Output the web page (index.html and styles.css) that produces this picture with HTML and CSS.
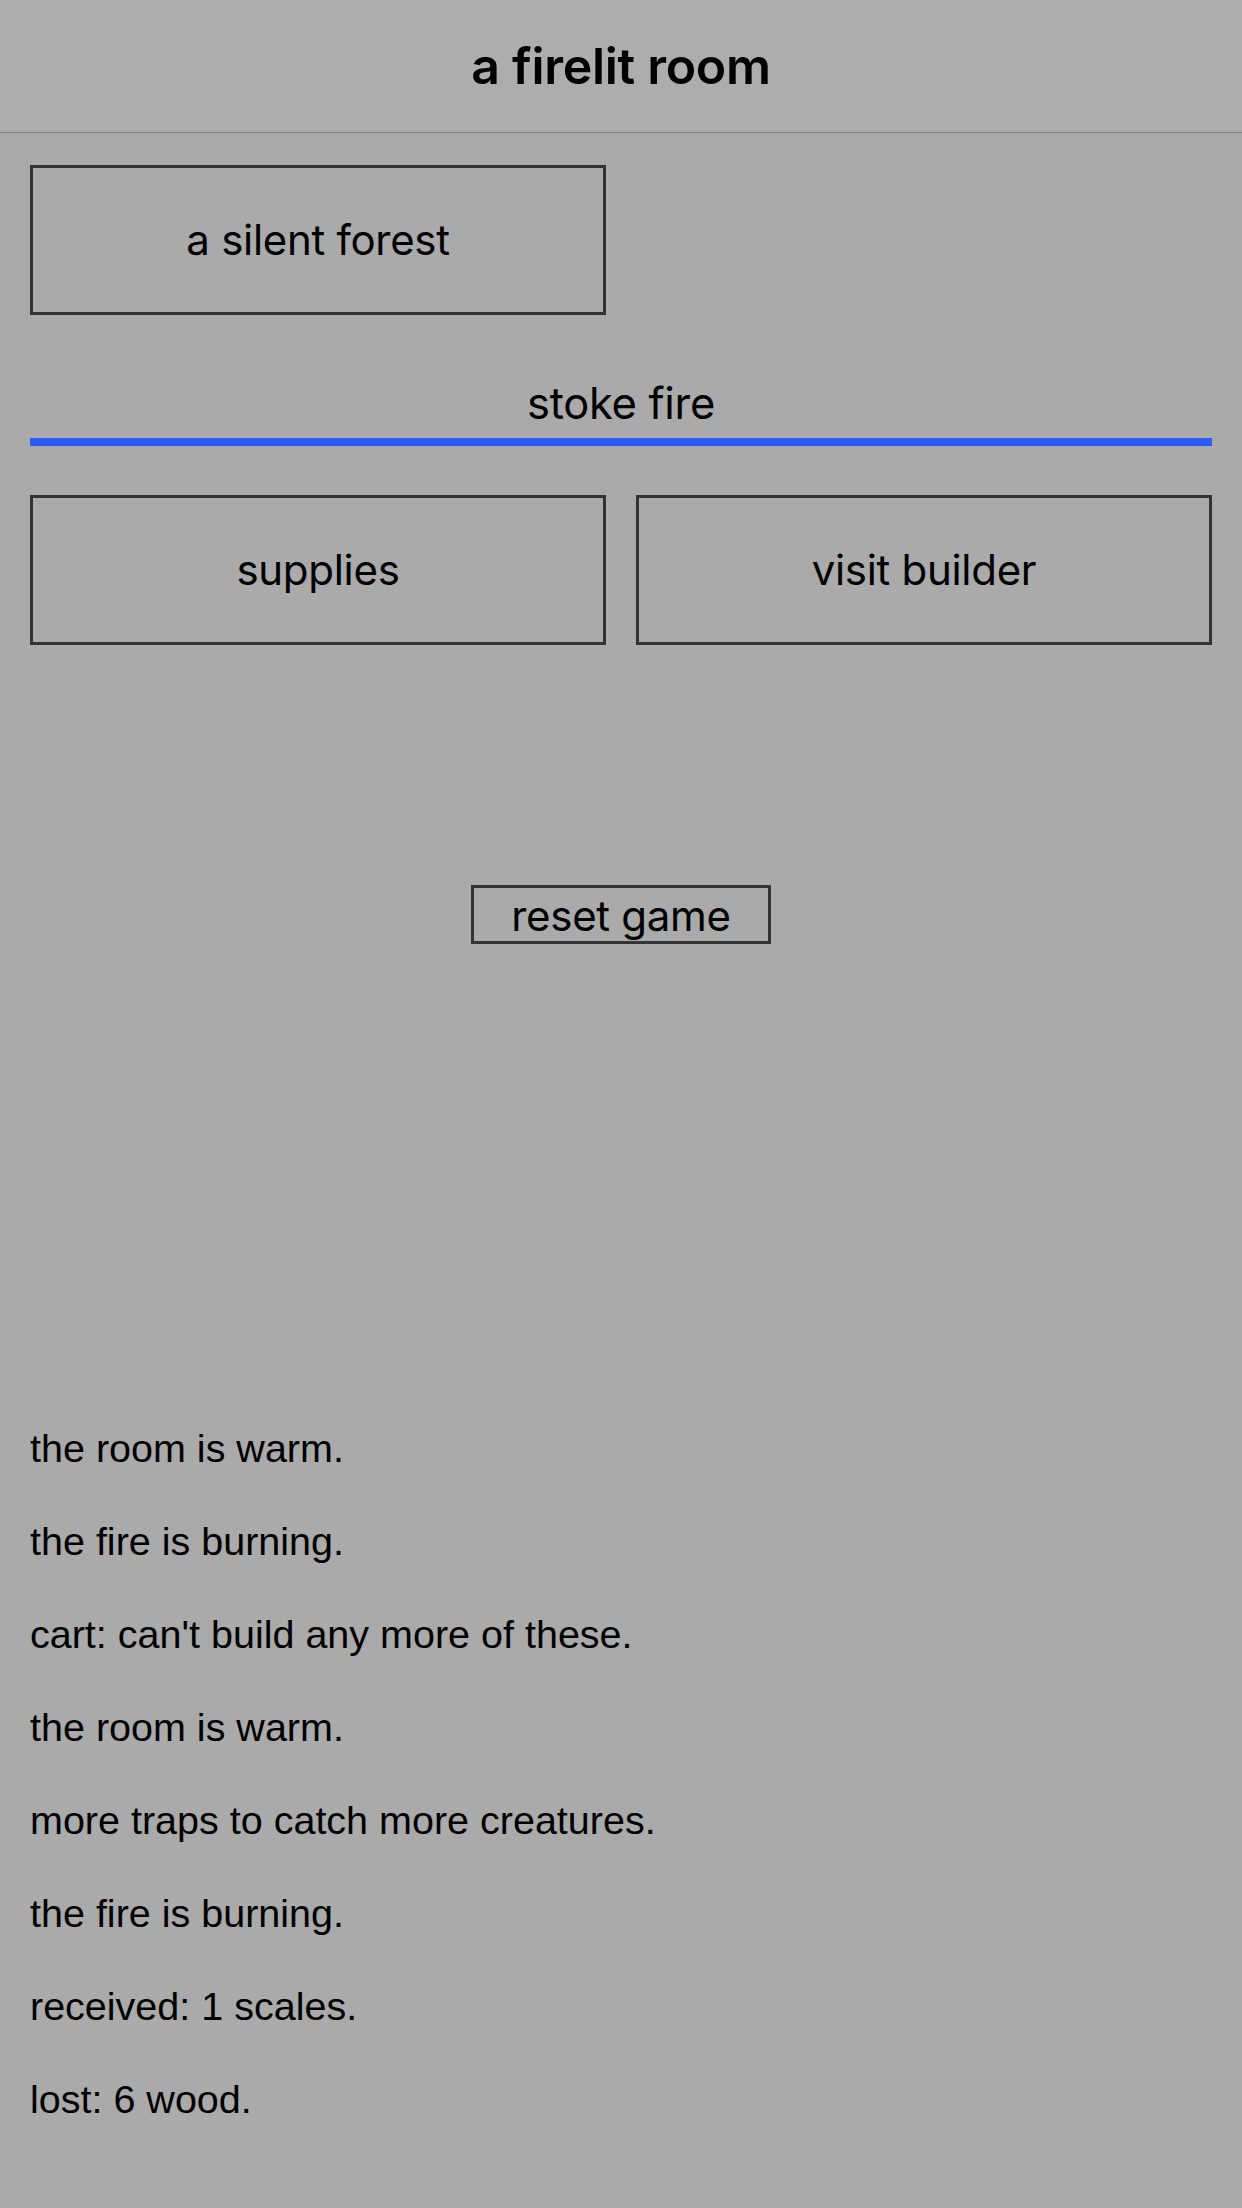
FILE: index.html
```html
<!DOCTYPE html>
<html lang="en">
<head>
    <meta charset="UTF-8">
    <meta name="viewport" content="width=device-width, initial-scale=1.0">
    <title>a firelit room</title>
    <link rel="stylesheet" href="styles.css">
</head>
<body>

    <header class="top-bar">
        <h1 class="title">a firelit room</h1>
    </header>

    <section class="room">
        <div class="btn travel">a silent forest</div>

        <div class="stoke">
            <div class="stoke-label">stoke fire</div>
            <div class="cooldown"></div>
        </div>

        <div class="btn-row">
            <div class="btn">supplies</div>
            <div class="btn">visit builder</div>
        </div>

        <div class="reset">reset game</div>

        <div class="log">
            <div class="note">the room is warm.</div>
            <div class="note">the fire is burning.</div>
            <div class="note">cart: can't build any more of these.</div>
            <div class="note">the room is warm.</div>
            <div class="note">more traps to catch more creatures.</div>
            <div class="note">the fire is burning.</div>
            <div class="note">received: 1 scales.</div>
            <div class="note">lost: 6 wood.</div>
        </div>
    </section>

</body>
</html>
```

FILE: styles.css
```css
body{
    margin: 0;
    background-color: rgb(170, 170, 170);
    color: black;
    font-family: Inter, "Liberation Sans", sans-serif;
}

.top-bar{
    height: 132px;
    background-color: rgb(173, 173, 173);
    border-bottom: 1px solid rgb(128, 128, 128);
    display: flex;
    align-items: center;
    justify-content: center;
}

.title{
    margin: 0;
    font-size: 50px;
    font-weight: 600;
    letter-spacing: -0.3px;
}

.room{
    padding: 0 30px;
}

.btn{
    box-sizing: border-box;
    height: 150px;
    border: 3px solid rgb(51, 51, 51);
    display: flex;
    align-items: center;
    justify-content: center;
    font-size: 42px;
    letter-spacing: -0.3px;
    line-height: 54px;
    cursor: pointer;
}

.travel{
    width: 576px;
    margin-top: 32px;
}

.stoke{
    margin-top: 61px;
    cursor: pointer;
}

.stoke-label{
    text-align: center;
    font-size: 43.5px;
    letter-spacing: -0.3px;
    line-height: 54px;
}

.cooldown{
    height: 8px;
    margin-top: 8px;
    background-color: rgb(40, 92, 245);
}

.btn-row{
    display: grid;
    grid-template-columns: 1fr 1fr;
    gap: 30px;
    margin-top: 49px;
}

.reset{
    box-sizing: border-box;
    width: 300px;
    height: 59px;
    margin: 240px auto 0;
    border: 3px solid rgb(51, 51, 51);
    display: flex;
    align-items: center;
    justify-content: center;
    font-size: 42px;
    letter-spacing: -0.3px;
    padding-top: 2px;
    cursor: pointer;
}

.log{
    margin-top: 458px;
    font-family: "Liberation Sans", Arial, sans-serif;
    font-size: 39.5px;
    line-height: 93px;
}
```
